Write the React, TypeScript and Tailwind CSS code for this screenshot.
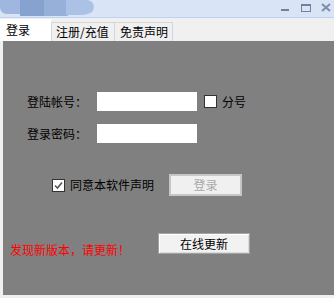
const font = { fontFamily: '"Noto Sans CJK SC", "Noto Sans", sans-serif' };

const CheckBox = ({ checked }: { checked?: boolean }) => (
  <div className="w-[13px] h-[13px] bg-white border border-[#333] flex items-center justify-center shrink-0">
    {checked && (
      <svg width="11" height="11" viewBox="0 0 11 11">
        <path d="M2 5.5 L4.5 8 L9 2.5" fill="none" stroke="#555" strokeWidth="1.6" />
      </svg>
    )}
  </div>
);

// blurred app logo in the caption
const CaptionLogo = () => (
  <svg width="104" height="17" viewBox="0 0 104 17" className="block shrink-0">
    <path d="M0 0 H22 V14 H8 Q1 14 0 8 Z" fill="#9fb6de" />
    <rect x="20" y="0" width="26" height="16" fill="#88a2cf" />
    <rect x="44" y="0" width="24" height="16" fill="#97b0da" />
    <path d="M66 0 H88 Q96 2 93 11 Q89 15 80 15 H66 Z" fill="#abc1e6" />
  </svg>
);

export default function App() {
  return (
    <div
      className="w-[334px] h-[298px] bg-[#f0f0f0] flex flex-col overflow-hidden text-[12px] leading-none text-black"
      style={font}
    >
      {/* title bar */}
      <div className="h-[18px] shrink-0 bg-[#d9e5f6] border-b border-[#bcd2ee] flex items-start">
        <CaptionLogo />
        <div className="ml-auto flex items-start">
          <svg width="54" height="16" viewBox="0 0 54 16" className="block">
            <rect x="1" y="9" width="8" height="2" fill="#6f819c" />
            <rect x="21.5" y="4.5" width="9" height="7" fill="none" stroke="#6f819c" strokeWidth="1" />
            <rect x="21" y="4" width="10" height="2" fill="#6f819c" />
            <path d="M42 4 L50 11 M50 4 L42 11" stroke="#7d8fa9" strokeWidth="2" />
          </svg>
        </div>
      </div>

      {/* tabs */}
      <div className="h-[23px] shrink-0 flex items-end">
        <div className="w-[51px] h-[22px] bg-white flex items-center pl-[6px]">登录</div>
        <div className="w-[64px] h-[19px] border border-[#d6d6d6] border-b-0 flex items-center pl-[4px]">
          注册/充值
        </div>
        <div className="w-[58px] h-[19px] border border-[#d6d6d6] border-l-0 border-b-0 flex items-center pl-[5px]">
          免责声明
        </div>
      </div>

      {/* panel */}
      <div className="ml-[3px] h-[254px] bg-[#808080] flex flex-col pt-[51px]">
        <div className="flex items-center h-[19px]">
          <div className="w-[94px] pl-[24px]">登陆帐号：</div>
          <div className="w-[100px] h-[19px] bg-white" />
          <div className="ml-[7px]">
            <CheckBox />
          </div>
          <div className="ml-[5px]">分号</div>
        </div>
        <div className="flex items-center h-[19px] mt-[13px]">
          <div className="w-[94px] pl-[24px]">登录密码：</div>
          <div className="w-[100px] h-[19px] bg-white" />
        </div>
        <div className="flex items-center h-[22px] mt-[31px]">
          <div className="ml-[49px]">
            <CheckBox checked />
          </div>
          <div className="ml-[5px] w-[99px]">同意本软件声明</div>
          <div className="w-[73px] h-[22px] border-2 border-[#c6c6c6] bg-[#f0f0f0] flex items-center justify-center text-[#a8a8a8]">
            登录
          </div>
        </div>
        <div className="flex items-end h-[21px] mt-[37px]">
          <div className="ml-[7px] w-[148px] text-[#ff0000] mb-[-2px]">发现新版本，请更新！</div>
          <div className="w-[92px] h-[21px] border border-[#a3a3a3] bg-[#f2f2f2] shadow-[inset_1px_1px_0_#fff,inset_-1px_-1px_0_#dcdcdc] flex items-center justify-center">
            在线更新
          </div>
        </div>
      </div>
    </div>
  );
}
